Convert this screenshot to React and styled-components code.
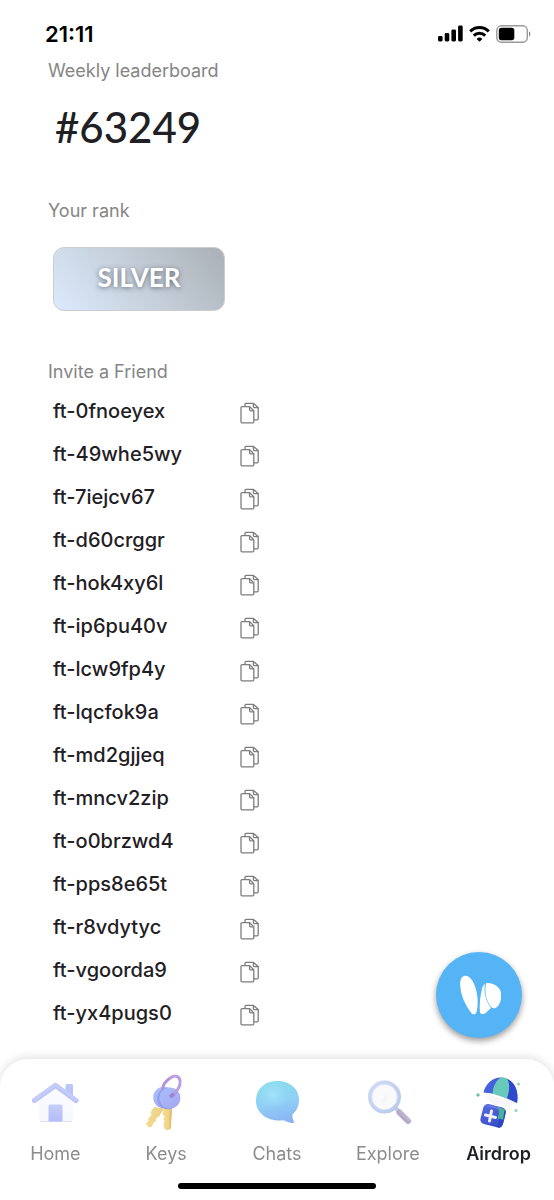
import styled, { createGlobalStyle, css } from 'styled-components'

const GlobalStyle = createGlobalStyle`
	* {
		box-sizing: border-box;
	}
	body {
		margin: 0;
		background: #fff;
		color: #1f2024;
		font-family: Inter, "Liberation Sans", sans-serif;
	}
	button {
		padding: 0;
		border: none;
		background: none;
		cursor: pointer;
	}
`
const Screen = styled.div`
	display: flex;
	flex-direction: column;
	min-height: 100vh;
`
const StatusBar = styled.header`
	display: flex;
	justify-content: space-between;
	align-items: center;
	height: 59px;
	padding: 8px 23px 0 45px;
`
const Time = styled.time`
	font-size: 22px;
	font-weight: 600;
	color: #000;
`
const StatusIcons = styled.div`
	display: flex;
	align-items: center;
	gap: 6px;
`
const Content = styled.main`
	flex: 1;
	padding: 0 48px 24px;
`
const Section = styled.section`
	margin-bottom: ${props => props.$gap}px;
`
const Label = styled.h2`
	margin: 0;
	font-size: 18px;
	font-weight: 400;
	line-height: 24px;
	color: #858585;
`
const Position = styled.p`
	margin: 18px 0 0;
	padding-left: 7px;
	font-family: Lato, sans-serif;
	font-size: 42px;
	font-weight: 500;
	line-height: 52px;
`
const Rank = styled.div`
	display: flex;
	justify-content: center;
	align-items: center;
	width: 172px;
	height: 64px;
	margin: 24px 0 0 5px;
	padding-bottom: 4px;
	border: 1px solid #cdcdcf;
	border-radius: 11px;
	background: linear-gradient(50deg, #dbeafd 0%, #c3ccd6 55%, #a9b0b6 100%);
	color: #fff;
	font-family: Lato, sans-serif;
	font-size: 26px;
	font-weight: 700;
	text-shadow: 0 1px 5px rgba(60, 65, 75, .7);
`
const Codes = styled.ul`
	margin: 5px 0 0;
	padding: 0 0 0 5px;
	list-style: none;
`
const Code = styled.li`
	display: flex;
	justify-content: space-between;
	align-items: center;
	width: 207px;
	height: 43px;
	font-size: 20px;
	font-weight: 500;
`
const CopyButton = styled.button`
	display: flex;
	padding-top: 4px;
`
const Fab = styled.button`
	position: fixed;
	right: 32px;
	bottom: 162px;
	display: flex;
	justify-content: center;
	align-items: center;
	width: 86px;
	height: 86px;
	&& {
		border-radius: 50%;
		background: #54b4f5;
	}
	box-shadow: 0 3px 6px rgba(0, 0, 0, .4);
`
const NavBar = styled.footer`
	position: sticky;
	bottom: 0;
	height: 141px;
	border-radius: 28px 28px 0 0;
	background: #fff;
	box-shadow: 0 -2px 10px rgba(0, 0, 0, .12);
`
const Tabs = styled.nav`
	display: grid;
	grid-template-columns: repeat(5, 1fr);
	padding-top: 14px;
`
const Tab = styled.a`
	display: flex;
	flex-direction: column;
	align-items: center;
	gap: 13px;
	font-size: 18px;
	line-height: 24px;
	color: #8c8c8c;
	text-decoration: none;
	${props => props.$active && css`
		font-weight: 600;
		color: #1f2024;
	`}
`
const HomeIndicator = styled.div`
	width: 198px;
	height: 6px;
	margin: 17px auto 0;
	border-radius: 3px;
	background: #000;
`

const SignalIcon = () => (
	<svg width="25" height="17" viewBox="0 0 25 17" aria-hidden="true">
		<rect x="0" y="11" width="4.6" height="5.500" rx="1.400" />
		<rect x="6.700" y="8" width="4.600" height="8.500" rx="1.400" />
		<rect x="13.400" y="4.500" width="4.600" height="12" rx="1.400" />
		<rect x="20.100" y="0.500" width="4.600" height="16" rx="1.400" />
	</svg>
)

const WifiIcon = () => (
	<svg width="21" height="16" viewBox="0 0 21 16" fill="none" stroke="#000" strokeWidth="3" aria-hidden="true">
		<path d="M1.2 5.4a13.2 13.2 0 0 1 18.6 0" />
		<path d="M4.8 9.6a8 8 0 0 1 11.4 0" />
		<path d="M7.6 13a4.2 4.2 0 0 1 5.8 0L10.5 15.8Z" fill="#000" stroke="none" />
	</svg>
)

const BatteryIcon = () => (
	<svg width="35" height="18" viewBox="0 0 35 18" aria-hidden="true">
		<rect x="0.8" y="0.8" width="30.5" height="16.4" rx="4.6" fill="none" stroke="#999" strokeWidth="1.4" />
		<rect x="2.8" y="2.8" width="15.5" height="12.4" rx="2.6" />
		<path d="M33 6.3c1.8.8 1.8 4.6 0 5.4Z" fill="#888" />
	</svg>
)

const CopyIcon = () => (
	<svg width="20" height="22" viewBox="0 0 20 22" fill="none" stroke="#7d7d7d" strokeWidth="1.3" strokeLinejoin="round" aria-hidden="true">
		<path d="M2 4.6h7.6l4.2 4.2v11a1 1 0 0 1-1 1H2a1 1 0 0 1-1-1V5.600a1 1 0 0 1 1-1Z" />
		<path d="M9.600 4.600v3.200a1 1 0 0 0 1 1h3.200" />
		<path d="M5 4.400V2.400a1 1 0 0 1 1-1h7.400l4.800 4.200v11.200a1 1 0 0 1-1 1H14" />
		<path d="M13.400 1.400v3.200a1 1 0 0 0 1 1h3.800" />
	</svg>
)

const WingsIcon = () => (
	<svg width="44" height="42" viewBox="0 0 44 42" fill="#fff" aria-hidden="true">
		<path d="M7 2C12 0 17.500 7.500 19.500 17.500c1.500 7 1.600 13 .3 19.500-.5 3.400-3.600 4.500-5.500 2C8.500 31.500 3.500 21 3.200 11 3 6.500 4 3 7 2Z" />
		<path d="M22.900 38c-.6-7.500.4-16.500 2.200-23.500.8-2.600 1.600-4.200 3-4.800-1.800 8 .8 17.500 5.900 24.300l-4.800 4.500c-2 2-5.800 2.400-6.300-.5Z" />
		<path d="M29.200 9.100c6-1 14.500 3.400 15 10.700.4 6-1.500 12-5.500 14.200-3 1-5.200-.8-6.700-4-3.400-6-4.600-13.800-2.800-20.900Z" />
	</svg>
)

const HomeIcon = () => (
	<svg width="54" height="56" viewBox="0 0 54 56" fill="none" aria-hidden="true">
		<defs>
			<linearGradient id="homeDoor" x1="0" y1="0" x2="0" y2="1">
				<stop offset="0" stopColor="#c5cdf9" />
				<stop offset="1" stopColor="#b4bdf6" />
			</linearGradient>
			<linearGradient id="homeWall" x1="0" y1="0" x2="0" y2="1">
				<stop offset="0" stopColor="#fafaff" />
				<stop offset="1" stopColor="#f7f8fe" />
			</linearGradient>
		</defs>
		<path d="M37.500 12.500a1.500 1.500 0 0 1 1.500-1.500h4.500a1.500 1.500 0 0 1 1.500 1.500V26l-7.500-6Z" fill="#bcc5f7" />
		<path d="M11 27 27.500 14 45 27v19a2 2 0 0 1-2 2H13a2 2 0 0 1-2-2Z" fill="url(#homeWall)" />
		<path d="M12 48.500h32" stroke="#dcdff5" strokeWidth="1" />
		<path d="M20.500 33a1.500 1.500 0 0 1 1.500-1.500h11a1.500 1.500 0 0 1 1.500 1.500v15.500h-14Z" fill="url(#homeDoor)" />
		<path d="M6.500 27.500 27.500 12.500l20.500 15" stroke="#bac3f6" strokeWidth="5" strokeLinecap="round" strokeLinejoin="round" />
		<path d="M6.500 26.500 27.500 11.500l20.500 15" stroke="#c3ccfa" strokeWidth="3.400" strokeLinecap="round" strokeLinejoin="round" />
	</svg>
)

const KeysIcon = () => (
	<svg width="54" height="58" viewBox="0 0 54 58" fill="none" aria-hidden="true">
		<defs>
			<linearGradient id="keyHead" x1="0" y1="0" x2="1" y2="1">
				<stop offset="0" stopColor="#a9c0fb" />
				<stop offset="1" stopColor="#a5a4f1" />
			</linearGradient>
			<linearGradient id="keyBlade" x1="0" y1="0" x2="1" y2="0">
				<stop offset="0" stopColor="#f4dc94" />
				<stop offset="1" stopColor="#ecce80" />
			</linearGradient>
		</defs>
		<path d="m15 34-3.500 5.500 1 2.500-3.500 3.500.5 2L7 51l3 3.500 3-1 1.600-4 2.200-1 .2-3 3-2 5-8Z" fill="url(#keyBlade)" />
		<path d="m24.500 35-.8 7 2 1.500-1.500 2.500 1.500 2-1.200 2.500.5 4.500 3 2.500 3.500-1.500 1.500-20.500Z" fill="url(#keyBlade)" />
		<path d="m31 36 2 .5-1.300 18.500-1.500 1.800Z" fill="#dfbd6d" />
		<circle cx="25" cy="24.500" r="10.800" fill="url(#keyHead)" />
		<circle cx="29" cy="25.500" r="10.800" fill="#929ee9" />
		<circle cx="31" cy="25" r="10.500" fill="url(#keyHead)" />
		<path d="M32.500 22.500c5-3 9-9 8.700-14-.5-5.500-5.500-6.800-10-3.500-4.500 3-7 7-7.700 10.500" stroke="#b491dc" strokeWidth="2.800" strokeLinecap="round" />
		<path d="M33 22c5-3 8.500-9 8.200-13.500-.5-5.500-5.500-6.800-10-3.500" stroke="#c2a5e8" strokeWidth="1.200" strokeLinecap="round" />
		<ellipse cx="33" cy="22.500" rx="2.800" ry="2" fill="#9f83ce" transform="rotate(-35 33 22.500)" />
	</svg>
)

const ChatsIcon = () => (
	<svg width="54" height="56" viewBox="0 0 54 56" fill="none" aria-hidden="true">
		<defs>
			<linearGradient id="chatBody" x1="0.4" y1="0" x2="0.6" y2="1">
				<stop offset="0" stopColor="#86dcec" />
				<stop offset="0.5" stopColor="#8fd0f5" />
				<stop offset="1" stopColor="#8bb3f4" />
			</linearGradient>
			<radialGradient id="chatGlow" cx="0.4" cy="0.35" r="0.4">
				<stop offset="0" stopColor="#aee8fb" stopOpacity="0.7" />
				<stop offset="1" stopColor="#a4e0fb" stopOpacity="0" />
			</radialGradient>
		</defs>
		<path d="M27 8c12.500 0 22 7.600 22 18.500 0 6.500-2.500 11.500-6.500 15-.3 3 .3 5.500 1.500 7 .5 1.500-1 1.700-2.500 1.400-3-.5-5.500-1.300-7.500-2.600C19 49 6 41 6 28 6 16.500 14.500 8 27 8Z" fill="url(#chatBody)" />
		<path d="M27 8c12.500 0 22 7.600 22 18.500 0 6.500-2.500 11.500-6.500 15C21.500 51 6 42 6 28 6 16.500 14.500 8 27 8Z" fill="url(#chatGlow)" />
	</svg>
)

const ExploreIcon = () => (
	<svg width="54" height="56" viewBox="0 0 54 56" fill="none" aria-hidden="true">
		<defs>
			<linearGradient id="lensRing" x1="0" y1="0" x2="1" y2="1">
				<stop offset="0" stopColor="#cfdaf6" />
				<stop offset="1" stopColor="#b7c9ea" />
			</linearGradient>
		</defs>
		<path d="m34.500 35 4 4" stroke="#bccbe9" strokeWidth="4" />
		<path d="m38.500 39.500 8.500 8.500" stroke="#b5aac9" strokeWidth="6" strokeLinecap="round" />
		<path d="m39.500 38.500 8.500 8.500" stroke="#c1b8d4" strokeWidth="2" strokeLinecap="round" />
		<circle cx="23.500" cy="24" r="14.500" fill="#fafafc" stroke="url(#lensRing)" strokeWidth="4" />
		<circle cx="23.500" cy="24" r="12.800" stroke="#dfe6f5" strokeWidth="1" />
		<path d="m20 28 6-9v7l-4 5Z" fill="#f5f5f6" />
	</svg>
)

const AirdropIcon = () => (
	<svg width="54" height="56" viewBox="0 0 54 56" fill="none" aria-hidden="true">
		<defs>
			<linearGradient id="dropBox" x1="0" y1="0" x2="1" y2="1">
				<stop offset="0" stopColor="#5a6be0" />
				<stop offset="1" stopColor="#3248c6" />
			</linearGradient>
		</defs>
		<path d="m12 20 8 11 17 4 7-5Z" fill="#f7f7fa" />
		<path d="M11.500 19.500C14 8.500 24 2.500 33 5c9 3 14 12.500 12 25-10-6-22-10-33.500-10.500Z" fill="#4660df" />
		<path d="M29 4.600c-5 3-8 8.500-8.500 16.200 5 1.200 10 3 14.500 5 3-8 3-16 .5-19.800-2-1.200-4.500-1.600-6.500-1.400Z" fill="#66c9b9" />
		<path d="M35 5.800c8.500 3.700 12 12.700 10 24.200l-10-4.500c3-8 3-15.700 0-19.700Z" fill="#3048cc" />
		<rect x="9.500" y="32.500" width="23" height="20.500" rx="4.500" fill="url(#dropBox)" transform="rotate(14 21 43)" />
		<path d="m28.500 34.500 5 3c.5 1 0 3-.5 5.500-.8 4-1.500 7.500-3 10-1 1.500-2.500 2-4 1.500Z" fill="#2f45c2" />
		<path d="m15 31.500 14.500 3 4 2.500-1 1-5-1.500-15-3.500Z" fill="#6475e4" />
		<path d="m25 34 7.500 2.500-1.500 10.500-2.500-1.500-3 1 1.800-7.500Z" fill="#49b39a" />
		<path d="m19.500 38-2 10M13.500 42l10 2.500" stroke="#f0eefb" strokeWidth="3" strokeLinecap="round" />
		<circle cx="6" cy="22" r="1.700" fill="#66c5a4" />
		<circle cx="46.500" cy="11" r="1.500" fill="#8bd2bd" />
		<circle cx="44" cy="37.500" r="1.500" fill="#8bd2bd" />
	</svg>
)

const codes = [
	'ft-0fnoeyex',
	'ft-49whe5wy',
	'ft-7iejcv67',
	'ft-d60crggr',
	'ft-hok4xy6l',
	'ft-ip6pu40v',
	'ft-lcw9fp4y',
	'ft-lqcfok9a',
	'ft-md2gjjeq',
	'ft-mncv2zip',
	'ft-o0brzwd4',
	'ft-pps8e65t',
	'ft-r8vdytyc',
	'ft-vgoorda9',
	'ft-yx4pugs0'
]

const tabs = [
	{ name: 'Home', Icon: HomeIcon },
	{ name: 'Keys', Icon: KeysIcon },
	{ name: 'Chats', Icon: ChatsIcon },
	{ name: 'Explore', Icon: ExploreIcon },
	{ name: 'Airdrop', Icon: AirdropIcon, active: true }
]

const TabIcon = styled.span`
	display: flex;
	height: 56px;
`

const App = () => {
	const handleCopy = code => {
		navigator.clipboard?.writeText(code)
	}

	return (
		<Screen>
			<GlobalStyle />
			<StatusBar>
				<Time>21:11</Time>
				<StatusIcons>
					<SignalIcon />
					<WifiIcon />
					<BatteryIcon />
				</StatusIcons>
			</StatusBar>
			<Content>
				<Section $gap={46}>
					<Label>Weekly leaderboard</Label>
					<Position>#63249</Position>
				</Section>
				<Section $gap={49}>
					<Label>Your rank</Label>
					<Rank>SILVER</Rank>
				</Section>
				<Section $gap={0}>
					<Label>Invite a Friend</Label>
					<Codes>
						{ codes.map(code => (
							<Code key={code}>
								{ code }
								<CopyButton aria-label={`Copy ${code}`} onClick={() => handleCopy(code)}>
									<CopyIcon />
								</CopyButton>
							</Code>
						)) }
					</Codes>
				</Section>
			</Content>
			<Fab aria-label="Open wallet">
				<WingsIcon />
			</Fab>
			<NavBar>
				<Tabs>
					{ tabs.map(({ name, Icon, active }) => (
						<Tab key={name} href={`#${name.toLowerCase()}`} $active={active} aria-current={active ? 'page' : undefined}>
							<TabIcon>
								<Icon />
							</TabIcon>
							{ name }
						</Tab>
					)) }
				</Tabs>
				<HomeIndicator />
			</NavBar>
		</Screen>
	)
}

export default App
